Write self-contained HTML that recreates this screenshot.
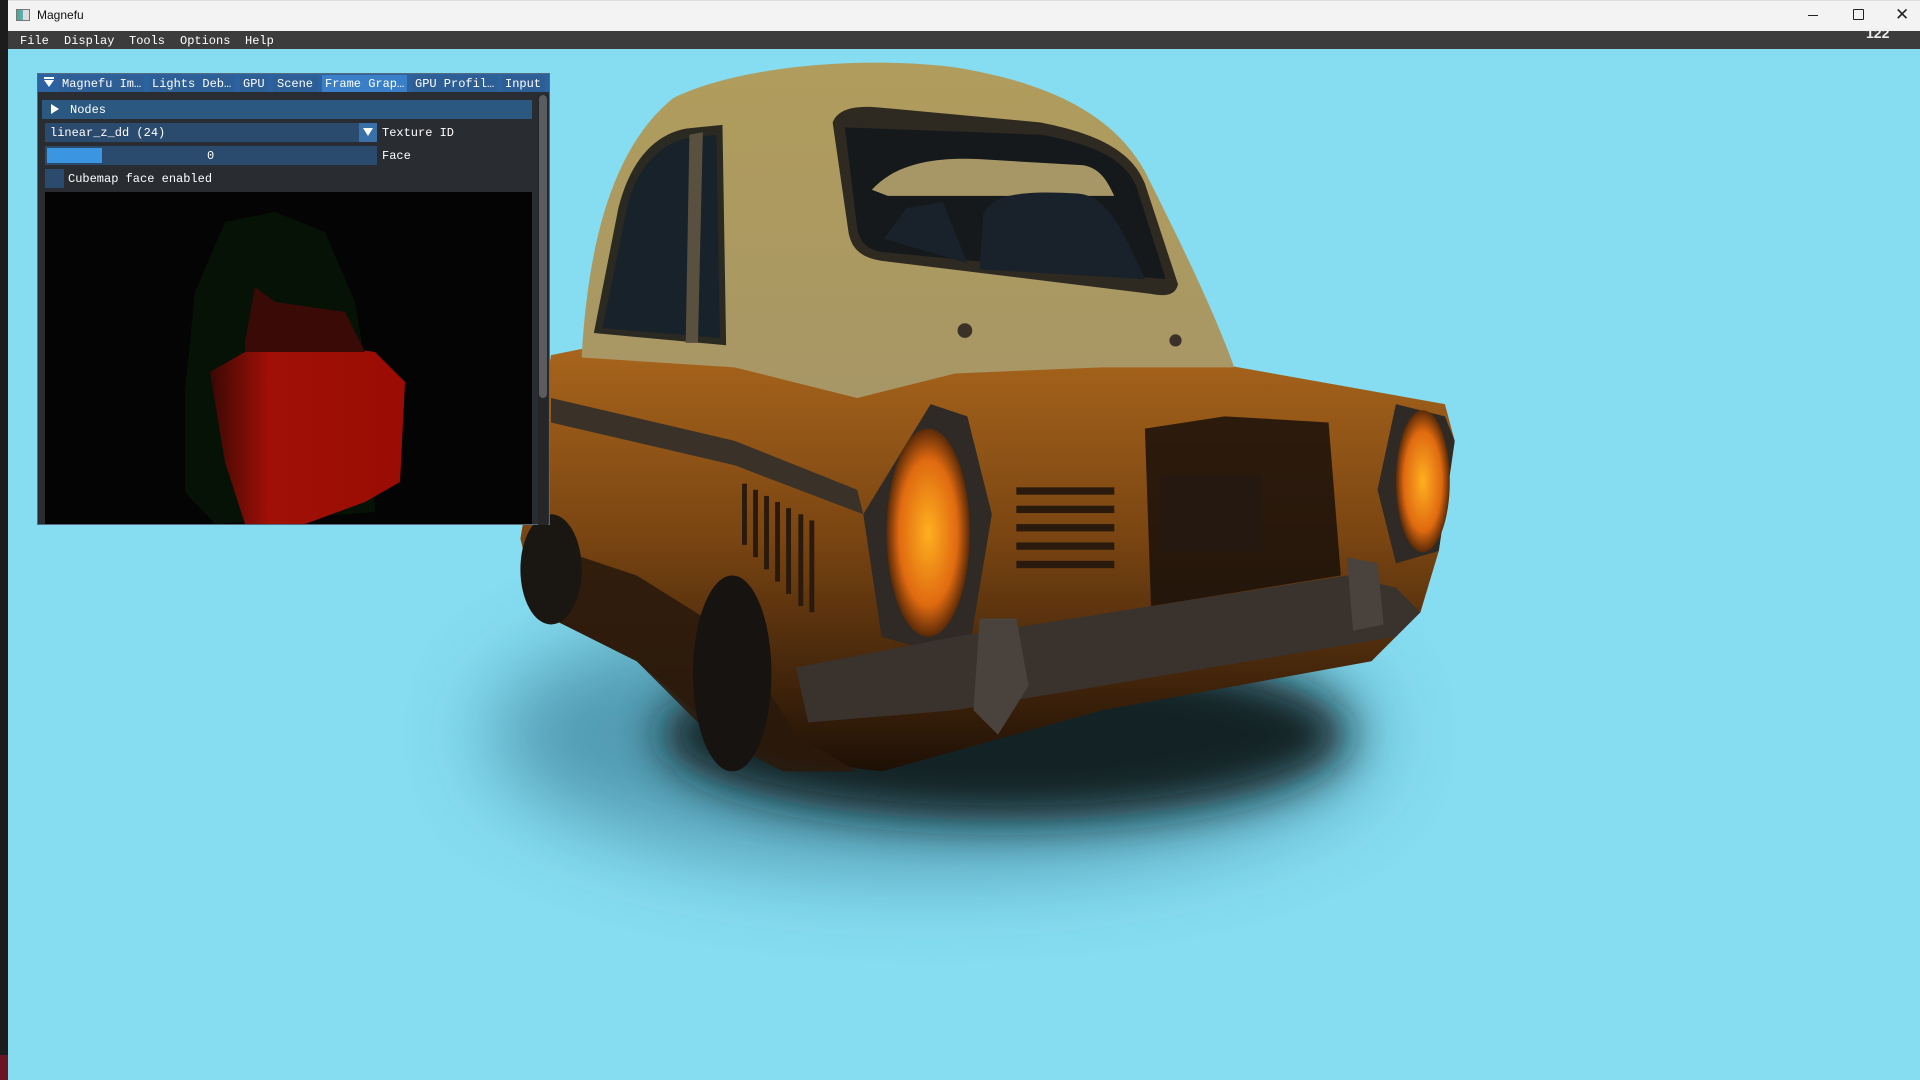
<!DOCTYPE html>
<html><head><meta charset="utf-8"><style>
*{margin:0;padding:0;box-sizing:border-box}
body{width:1920px;height:1080px;overflow:hidden;background:#86dcf0;position:relative;font-family:"Liberation Mono",monospace;}
.abs{position:absolute}
.t{color:#fff;font-size:12px;line-height:1;white-space:pre}
</style></head><body>
<div class="abs" style="left:0;top:0;width:8px;height:1080px;background:#1c1c1c"></div>
<div class="abs" style="left:0;top:1055px;width:8px;height:25px;background:#6b1424"></div>
<div class="abs" style="left:8px;top:0;width:1912px;height:31px;background:#f3f3f3;border-top:1px solid #ddd"></div>
<div class="abs" style="left:16px;top:9px;width:14px;height:12px;border:1px solid #777;background:linear-gradient(90deg,#4a8 0,#6ab 50%,#ddd 50%)"></div>
<div class="abs" style="left:37px;top:8px;font-family:'Liberation Sans',sans-serif;font-size:12px;color:#111">Magnefu</div>
<div class="abs" style="left:1808px;top:15px;width:10px;height:1px;background:#222"></div>
<div class="abs" style="left:1853px;top:9px;width:11px;height:11px;border:1px solid #222;border-radius:1px"></div>
<div class="abs" style="left:1895px;top:5px;font-family:'Liberation Sans',sans-serif;font-size:17px;color:#222">✕</div>
<div class="abs" style="left:8px;top:31px;width:1912px;height:18px;background:#3c3c3c"></div>
<div class="abs t" style="left:20px;top:35px">File</div>
<div class="abs t" style="left:64px;top:35px">Display</div>
<div class="abs t" style="left:129px;top:35px">Tools</div>
<div class="abs t" style="left:180px;top:35px">Options</div>
<div class="abs t" style="left:245px;top:35px">Help</div>
<div class="abs" style="left:1866px;top:26px;color:#eee;font-family:'Liberation Sans',sans-serif;font-weight:bold;font-size:14px;line-height:1;height:12px;overflow:hidden">122</div>

<svg class="abs" style="left:0;top:0" width="1920" height="1080" viewBox="0 0 1568 882">
<defs>
<filter id="b1" x="-50%" y="-100%" width="200%" height="300%"><feGaussianBlur stdDeviation="35"/></filter>
<filter id="b3" x="-50%" y="-100%" width="200%" height="300%"><feGaussianBlur stdDeviation="18"/></filter>
<linearGradient id="body" x1="0" y1="0" x2="0" y2="1"><stop offset="0" stop-color="#a8651c"/><stop offset=".45" stop-color="#7a4512"/><stop offset="1" stop-color="#1e1006"/></linearGradient>
<linearGradient id="roofg" x1="0" y1="0" x2="0" y2="1"><stop offset="0" stop-color="#b09c5c"/><stop offset="1" stop-color="#a89766"/></linearGradient>
<radialGradient id="hl" cx=".5" cy=".5" r=".5"><stop offset="0" stop-color="#ffb020"/><stop offset=".7" stop-color="#e06a10"/><stop offset="1" stop-color="#5a2a08"/></radialGradient>
</defs>
<ellipse cx="760" cy="600" rx="360" ry="110" fill="#3a7f96" filter="url(#b1)" opacity=".7"/>
<ellipse cx="820" cy="600" rx="280" ry="70" fill="#0a1418" filter="url(#b3)" opacity=".9"/>
<!-- body -->
<path d="M450 290 L490 282 L700 292 L1000 298 L1180 330 L1188 360 L1175 450 L1160 500 L1120 540 L900 580 L720 630 L640 620 L590 600 L520 540 L440 500 L425 440 Z" fill="url(#body)"/>
<path d="M430 440 L520 470 L600 520 L650 600 L700 630 L640 630 L580 600 L520 540 L440 500 Z" fill="#2a1a0c" opacity=".9"/>
<!-- roof -->
<path d="M475 292 C480 200 500 120 550 80 C600 55 700 45 780 55 C860 68 910 95 935 140 C960 190 990 250 1008 300 L900 300 L780 305 L700 325 L600 300 Z" fill="url(#roofg)"/>
<!-- rear window -->
<path d="M680 100 C685 88 700 86 720 88 L850 100 C900 110 925 125 935 150 L962 232 C960 242 950 242 940 240 L720 213 C700 210 695 200 693 190 Z" fill="#2e2a22"/>
<path d="M690 104 L850 110 C895 118 918 130 928 152 L952 228 L722 206 C706 204 702 196 700 186 Z" fill="#16191c"/>
<path d="M712 155 C730 135 760 128 800 130 L885 135 C900 138 905 150 910 160 L725 160 Z" fill="#a89766"/>
<path d="M722 195 L740 170 L770 165 L790 215 Z" fill="#19222a"/>
<path d="M800 220 L803 175 C810 160 830 155 880 158 C900 160 912 175 935 228 Z" fill="#19222a"/>
<!-- side window -->
<path d="M485 272 L505 170 C515 130 535 110 560 105 L590 102 L593 282 Z" fill="#2a2a22"/>
<path d="M492 268 L512 170 C520 135 540 118 560 113 L585 110 L588 276 Z" fill="#18222a"/>
<path d="M563 110 L560 280 L570 280 L574 108 Z" fill="#5a5040"/>
<circle cx="788" cy="270" r="6" fill="#3a3228"/><circle cx="960" cy="278" r="5" fill="#3a3228"/>
<!-- stripe -->
<path d="M450 325 L600 360 L700 400 L705 420 L600 380 L450 345 Z" fill="#3a3128"/>
<g fill="#2a1a0e"><rect x="606" y="395" width="4" height="50"/><rect x="615" y="400" width="4" height="55"/><rect x="624" y="405" width="4" height="60"/><rect x="633" y="410" width="4" height="65"/><rect x="642" y="415" width="4" height="70"/><rect x="652" y="420" width="4" height="75"/><rect x="661" y="425" width="4" height="75"/></g>
<g fill="#2a1a0e"><rect x="830" y="398" width="80" height="6"/><rect x="830" y="413" width="80" height="6"/><rect x="830" y="428" width="80" height="6"/><rect x="830" y="443" width="80" height="6"/><rect x="830" y="458" width="80" height="6"/></g>
<path d="M935 350 L1000 340 L1085 345 L1095 470 L940 495 Z" fill="#1a100a" opacity=".85"/>
<rect x="948" y="388" width="82" height="62" fill="#241810"/>
<path d="M760 330 L790 340 L810 420 L790 540 L720 520 L705 420 Z" fill="#2f2a26"/>
<ellipse cx="758" cy="435" rx="34" ry="85" fill="url(#hl)"/>
<path d="M1140 330 L1180 340 L1188 360 L1175 450 L1140 460 L1125 400 Z" fill="#2f2a26"/>
<ellipse cx="1162" cy="393" rx="22" ry="58" fill="url(#hl)"/>
<!-- bumper -->
<path d="M650 545 L780 520 L1100 470 L1140 480 L1160 500 L1140 520 L900 560 L780 580 L660 590 Z" fill="#3a322c"/>
<path d="M800 505 L830 505 L840 560 L815 600 L795 580 Z" fill="#4a423c"/>
<path d="M1100 455 L1125 460 L1130 510 L1105 515 Z" fill="#4a423c"/>
<ellipse cx="598" cy="550" rx="32" ry="80" fill="#171310"/>
<ellipse cx="450" cy="465" rx="25" ry="45" fill="#1a1612"/>
</svg>

<!-- ImGui panel -->
<div class="abs" style="left:37px;top:73px;width:513px;height:452px;background:#292d31;border:1px solid #566a7e"></div>
<div class="abs" style="left:38px;top:74px;width:511px;height:18px;background:#2c62a0"></div>
<div class="abs" style="left:44px;top:80px;width:0;height:0;border-left:5px solid transparent;border-right:5px solid transparent;border-top:7px solid #fff"></div>
<div class="abs" style="left:44px;top:77px;width:10px;height:2px;background:#fff"></div>
<div class="abs" style="left:59px;top:75px;width:85px;height:17px;background:#2d5e96"></div>
<div class="abs" style="left:149px;top:75px;width:85px;height:17px;background:#2d5e96"></div>
<div class="abs" style="left:240px;top:75px;width:28px;height:17px;background:#2d5e96"></div>
<div class="abs" style="left:273px;top:75px;width:45px;height:17px;background:#2d5e96"></div>
<div class="abs" style="left:322px;top:75px;width:85px;height:17px;background:#3a7fc8"></div>
<div class="abs" style="left:412px;top:75px;width:85px;height:17px;background:#2d5e96"></div>
<div class="abs" style="left:502px;top:75px;width:43px;height:17px;background:#2d5e96"></div>
<div class="abs t" style="left:62px;top:78px">Magnefu Im…</div>
<div class="abs t" style="left:152px;top:78px">Lights Deb…</div>
<div class="abs t" style="left:243px;top:78px">GPU</div>
<div class="abs t" style="left:277px;top:78px">Scene</div>
<div class="abs t" style="left:325px;top:78px">Frame Grap…</div>
<div class="abs t" style="left:415px;top:78px">GPU Profil…</div>
<div class="abs t" style="left:505px;top:78px">Input</div>
<div class="abs" style="left:42px;top:100px;width:490px;height:19px;background:#2a5880"></div>
<div class="abs" style="left:51px;top:104px;width:0;height:0;border-top:5px solid transparent;border-bottom:5px solid transparent;border-left:8px solid #fff"></div>
<div class="abs t" style="left:70px;top:104px">Nodes</div>
<div class="abs" style="left:45px;top:123px;width:332px;height:19px;background:#2a4a6e"></div>
<div class="abs" style="left:359px;top:123px;width:18px;height:19px;background:#3a70a8"></div>
<div class="abs" style="left:363px;top:128px;width:0;height:0;border-left:5px solid transparent;border-right:5px solid transparent;border-top:8px solid #fff"></div>
<div class="abs t" style="left:50px;top:127px">linear_z_dd (24)</div>
<div class="abs t" style="left:382px;top:127px">Texture ID</div>
<div class="abs" style="left:45px;top:146px;width:332px;height:19px;background:#2a4a6e"></div>
<div class="abs" style="left:47px;top:148px;width:55px;height:15px;background:#3b95e0"></div>
<div class="abs t" style="left:207px;top:150px">0</div>
<div class="abs t" style="left:382px;top:150px">Face</div>
<div class="abs" style="left:45px;top:169px;width:19px;height:19px;background:#2a4a6e"></div>
<div class="abs t" style="left:68px;top:173px">Cubemap face enabled</div>
<div class="abs" style="left:538px;top:95px;width:10px;height:430px;background:#242628"></div>
<div class="abs" style="left:539px;top:95px;width:8px;height:303px;background:#5a5c60;border-radius:4px"></div>
<div class="abs" style="left:45px;top:192px;width:487px;height:332px;background:#040404;overflow:hidden">
<svg width="487" height="332" viewBox="0 0 487 332">
<defs><linearGradient id="r" x1="0" x2="1"><stop offset="0" stop-color="#3a0804"/><stop offset=".3" stop-color="#a01006"/><stop offset="1" stop-color="#9a0c04"/></linearGradient></defs>
<path d="M140 200 L150 100 L180 30 L230 20 L280 40 L310 110 L320 170 L330 320 L170 332 L140 300 Z" fill="#071207"/>
<path d="M165 180 L200 160 L260 150 L330 160 L360 190 L355 290 L320 310 L260 332 L200 332 L180 270 Z" fill="url(#r)"/>
<path d="M200 150 L210 95 L230 110 L300 120 L320 160 L200 160 Z" fill="#3a0a06"/>
</svg></div>
</body></html>
